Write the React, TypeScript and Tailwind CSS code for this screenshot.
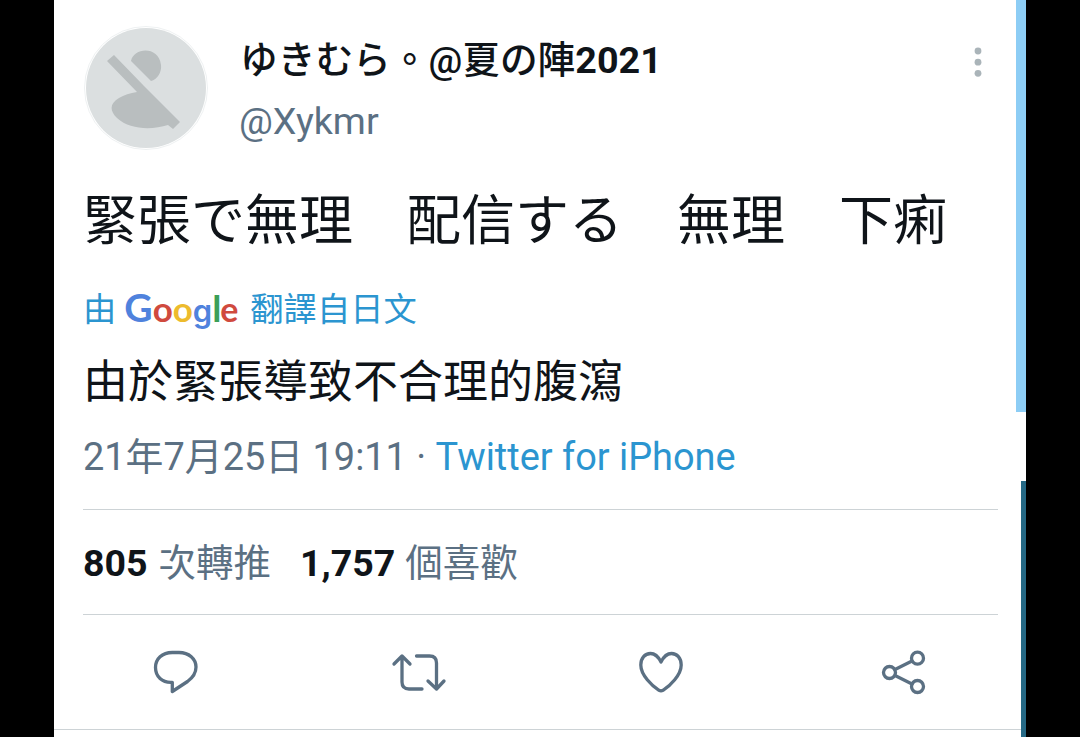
import React from "react";

function Avatar() {
  return (
    <svg viewBox="0 0 124 124" className="h-[124px] w-[124px] shrink-0">
      <circle cx="62" cy="62" r="61.5" fill="none" stroke="#eef1f2" strokeWidth="1" />
      <circle cx="62" cy="62" r="60" fill="#dbdfe0" />
      <path d="M47 35 C50 21 75 20 77 39 C78 46 73 54 67 55 Z" fill="#b9bebf" />
      <path
        d="M30 29 L60 60 L96 96 L89 103 L84 99 C68 104 46 104 33 92 C26 85 25 78 35 72 C40 69 46 67 53 66 L23 35 Z"
        fill="#b9bebf"
      />
    </svg>
  );
}

function GoogleLogo() {
  return (
    <span className="mb-[2px] flex w-[114px] items-baseline font-['Lato',sans-serif] text-[35px] font-bold leading-[40px]">
      <span className="w-[29px] text-[39px] text-[#4f82dd]">G</span>
      <span className="w-[20px] text-[#d04a3e]">o</span>
      <span className="w-[20px] text-[#edbb2d]">o</span>
      <span className="w-[20px] font-['Inter',sans-serif] text-[31px] font-semibold text-[#4f82dd]">g</span>
      <span className="w-[8px] text-[37px] tracking-[-2.5px] text-[#3c9f58]">l</span>
      <span className="text-[34px] text-[#d04a3e]">e</span>
    </span>
  );
}

const iconProps = {
  viewBox: "0 0 56 48",
  className: "h-12 w-14",
  fill: "none",
  stroke: "#5b7083",
  strokeWidth: 3.3,
  strokeLinecap: "round" as const,
  strokeLinejoin: "round" as const,
};

function Actions() {
  return (
    <div className="flex h-[114px] items-center justify-between pl-[94px] pr-[94px]">
      <svg {...iconProps}>
        <path d="M24.3 4.5 H31 C41 4.5 48 11 48 19 C48 25.5 45 29.5 39.5 33.5 L24.3 43.5 V34.3 C14 35 7.5 28.5 7.5 19.5 C7.5 11 14 4.5 24.3 4.5 Z" />
      </svg>
      <svg {...iconProps}>
        <path d="M3 16 L11 8 L19 16 M11 9 V34 Q11 41 18 41 H31 M25.5 8 H38.5 Q45.5 8 45.5 15 V40 M37 33 L45.5 41 L53 33" />
      </svg>
      <svg {...iconProps}>
        <path d="M28 14 C25 8 21.5 5.5 17.5 5.5 C12 5.5 7.8 10 7.8 17 C7.8 27 19 38 26 42.3 Q28 43.3 30 42.3 C37 38 48.2 27 48.2 17 C48.2 10 44 5.5 38.5 5.5 C34.5 5.5 31 8 28 14 Z" />
      </svg>
      <svg {...iconProps}>
        <circle cx="13.5" cy="24.5" r="6" />
        <circle cx="41.5" cy="10.2" r="6" />
        <circle cx="41.5" cy="38.5" r="6" />
        <path d="M19 21.5 L36 13 M19 27.5 L36 36" />
      </svg>
    </div>
  );
}

export default function App() {
  return (
    <div className="flex h-[737px] w-[1080px] overflow-hidden bg-black px-[54px] font-['Roboto','Noto_Sans_CJK_TC',sans-serif] text-[#0f1419]">
      <main className="w-[972px] shrink-0 bg-white">
        <div className="pl-[29px] pr-[39px]">
          <header className="flex h-[182px] pt-[26px] pl-px">
            <Avatar />
            <div className="ml-[32px] flex-1">
              <h1 className="flex h-[68px] items-center whitespace-nowrap text-[37.7px] font-medium">
                ゆきむら。@夏の陣<span className="font-bold">2021</span>
              </h1>
              <p className="-ml-px flex h-[54px] items-center text-[37.7px] text-[#5b7083]">@Xykmr</p>
            </div>
            <svg viewBox="0 0 8 32" className="mt-5 mr-[5px] h-8 w-2" fill="#aab4b9">
              <circle cx="4" cy="5" r="3.4" />
              <circle cx="4" cy="16.2" r="3.4" />
              <circle cx="4" cy="27.3" r="3.4" />
            </svg>
          </header>

          <p className="h-[101px] whitespace-pre text-[54px] leading-[80px]">
            緊張で無理　配信する　無理　下痢
          </p>
          <div className="flex h-[53px] items-center whitespace-nowrap text-[33.3px] text-[#2b95d0]">
            <span className="mr-2">由</span>
            <GoogleLogo />
            <span className="ml-[12px]">翻譯自日文</span>
          </div>
          <p className="h-[89px] whitespace-nowrap text-[45px] leading-[93px]">
            由於緊張導致不合理的腹瀉
          </p>
          <p className="h-[84px] whitespace-nowrap text-[37.9px] leading-[64px] text-[#5b7083]">
            21年7月25日 19:11 · <span className="text-[#2b95d0]">Twitter for iPhone</span>
          </p>
        </div>

        <div className="ml-[29px] flex h-[106px] w-[915px] items-center whitespace-nowrap border-y border-[#cdd3d6] pt-[3px] text-[37.5px] text-[#5b7083]">
          <span>
            <b className="text-[#0f1419]">805</b>
            <span className="ml-[11px]">次轉推</span>
          </span>
          <span className="ml-[29px]">
            <b className="text-[#0f1419]">1,757</b>
            <span className="ml-[10px]">個喜歡</span>
          </span>
        </div>
        <Actions />
        <div className="h-px bg-[#cdd3d6]" />
      </main>
      <aside className="z-10 -ml-[10px] flex w-[10px] shrink-0 flex-col items-end">
        <div className="h-[412px] w-[10px] bg-[#8dcdf5]" />
        <div className="mt-[69px] w-[5px] flex-1 bg-[#266985]" />
      </aside>
    </div>
  );
}
